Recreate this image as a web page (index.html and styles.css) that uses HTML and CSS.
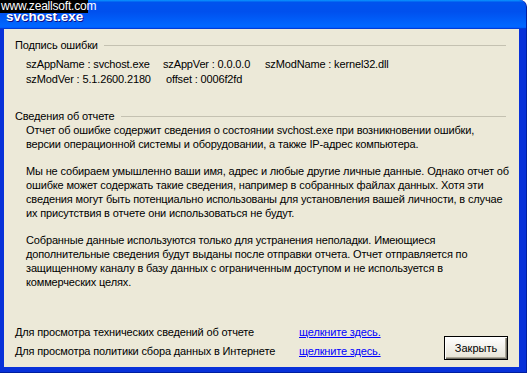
FILE: index.html
```
<!DOCTYPE html>
<html lang="ru">
<head>
    <meta charset="UTF-8">
    <title>svchost.exe</title>
    <link rel="stylesheet" href="styles.css">
</head>
<body>
    <div class="watermark">www.zeallsoft.com</div>
    <div class="window">
        <div class="titlebar">svchost.exe</div>
        <div class="content">
            <div class="group sign">
                <div class="group-title"><span>Подпись ошибки</span></div>
                <div class="sig-row">
                    <span class="c1">szAppName : svchost.exe</span>
                    <span class="c2">szAppVer : 0.0.0.0</span>
                    <span>szModName : kernel32.dll</span>
                </div>
                <div class="sig-row">
                    <span class="c1">szModVer : 5.1.2600.2180</span>
                    <span class="c2 off">offset : 0006f2fd</span>
                </div>
            </div>

            <div class="group info">
                <div class="group-title"><span>Сведения об отчете</span></div>
                <p>Отчет об ошибке содержит сведения о состоянии svchost.exe при возникновении ошибки,<br>
                версии операционной системы и оборудовании, а также IP-адрес компьютера.</p>
                <p>Мы не собираем умышленно ваши имя, адрес и любые другие личные данные. Однако отчет об<br>
                ошибке может содержать такие сведения, например в собранных файлах данных. Хотя эти<br>
                сведения могут быть потенциально использованы для установления вашей личности, в случае<br>
                их присутствия в отчете они использоваться не будут.</p>
                <p>Собранные данные используются только для устранения неполадки. Имеющиеся<br>
                дополнительные сведения будут выданы после отправки отчета. Отчет отправляется по<br>
                защищенному каналу в базу данных с ограниченным доступом и не используется в<br>
                коммерческих целях.</p>
            </div>

            <div class="footer">
                <div class="links">
                    <div class="link-row">
                        <span class="link-label">Для просмотра технических сведений об отчете</span>
                        <a href="#">щелкните здесь.</a>
                    </div>
                    <div class="link-row">
                        <span class="link-label">Для просмотра политики сбора данных в Интернете</span>
                        <a href="#">щелкните здесь.</a>
                    </div>
                </div>
                <button class="close-btn">Закрыть</button>
            </div>
        </div>
    </div>
</body>
</html>
```
FILE: styles.css
```
html, body {
    margin: 0;
    padding: 0;
}
body {
    width: 527px;
    height: 373px;
    overflow: hidden;
    font-family: "Liberation Sans", Arial, sans-serif;
    font-size: 11px;
    color: #000;
    position: relative;
}
.watermark {
    position: absolute;
    left: 0;
    top: 0;
    width: 88px;
    height: 13px;
    line-height: 13px;
    background: #000;
    color: #fff;
    font-size: 12px;
    letter-spacing: -0.2px;
    padding-left: 1px;
    box-sizing: border-box;
    z-index: 2;
}
.window {
    width: 527px;
    height: 373px;
    display: flex;
    flex-direction: column;
    background: #0831d9;
    border-radius: 7px 7px 0 0;
    box-sizing: border-box;
    border-right: 1px solid #001ea0;
    border-bottom: 1px solid #001ea0;
}
.titlebar {
    height: 29px;
    box-sizing: border-box;
    padding: 9px 0 0 6px;
    color: #fff;
    font-weight: bold;
    font-size: 13.5px;
    line-height: 15px;
    text-shadow: 1px 1px #0f1089;
    border-radius: 7px 7px 0 0;
    background: linear-gradient(to bottom, #0997ff 0%, #0053ee 8%, #0050ee 40%, #0066ff 88%, #0066ff 93%, #005bff 95%, #003dd7 96%, #003dd7 100%);
}
.content {
    flex: 1;
    margin: 0 7px 5px 4px;
    background: #ece9d8;
    padding: 9px 10px 0 11px;
    display: flex;
    flex-direction: column;
    line-height: 14px;
    letter-spacing: -0.15px;
}
.group-title {
    display: flex;
    align-items: center;
    margin-right: 3px;
}
.group-title::after {
    content: "";
    flex: 1;
    height: 0;
    border-top: 1px solid #c4c1b1;
    margin-left: 6px;
}
.sig-row {
    display: flex;
    padding-left: 11px;
    white-space: nowrap;
}
.sign .sig-row:nth-child(2) {
    margin-top: 5px;
}
.sign .sig-row:nth-child(3) {
    margin-top: 1px;
}
.c1 {
    width: 137px;
}
.c2 {
    width: 102px;
}
.off {
    padding-left: 3px;
}
.info {
    margin-top: 23px;
}
.info p {
    margin: 0 0 13px 11px;
    white-space: nowrap;
}
.footer {
    margin-top: 23px;
    display: flex;
    align-items: flex-start;
}
.links {
    flex: 1;
}
.link-row {
    display: flex;
    height: 19px;
}
.link-label {
    width: 284px;
}
.link-row a {
    color: #0000ff;
}
.close-btn {
    margin: 11px 1px 0 0;
    width: 64px;
    height: 24px;
    font-family: "Liberation Sans", Arial, sans-serif;
    font-size: 11px;
    background: linear-gradient(to bottom, #fff 0%, #f4f3ee 40%, #e6e3d3 100%);
    border: 1px solid #000;
    box-shadow: inset 1px 1px #fff, inset -1px -1px #716f64, inset -2px -2px #aca899;
    padding: 0;
}
```
